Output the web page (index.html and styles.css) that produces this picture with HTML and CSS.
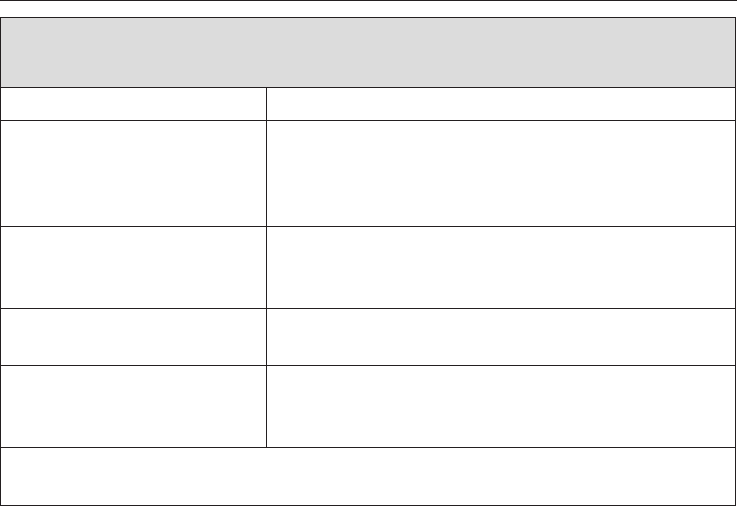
FILE: index.html
```html
<!DOCTYPE html>
<html lang="en">
<head>
<meta charset="utf-8">
<title>Table</title>
<link rel="stylesheet" href="styles.css">
</head>
<body>
<div class="rule"></div>
<div class="table">
  <div class="cell head span"></div>
  <div class="cell r1"></div><div class="cell r1"></div>
  <div class="cell r2"></div><div class="cell r2"></div>
  <div class="cell r3"></div><div class="cell r3"></div>
  <div class="cell r4"></div><div class="cell r4"></div>
  <div class="cell r5"></div><div class="cell r5"></div>
  <div class="cell r6 span"></div>
</div>
</body>
</html>
```
FILE: styles.css
```css
html, body {
  margin: 0;
  padding: 0;
  background: #ffffff;
  font-family: "Liberation Sans", Arial, sans-serif;
}
.rule {
  width: 737px;
  border-top: 1px solid #231f20;
  height: 0;
}
.table {
  margin-top: 16px;
  width: 735px;
  display: grid;
  grid-template-columns: 266px 1fr;
  border-top: 1px solid #231f20;
  border-left: 1px solid #231f20;
}
.cell {
  border-right: 1px solid #231f20;
  border-bottom: 1px solid #231f20;
  box-sizing: border-box;
}
.span { grid-column: 1 / -1; }
.head { background: #dcdcdc; height: 70px; }
.r1 { height: 33px; }
.r2 { height: 106px; }
.r3 { height: 82px; }
.r4 { height: 57px; }
.r5 { height: 82px; }
.r6 { height: 58px; }
```
